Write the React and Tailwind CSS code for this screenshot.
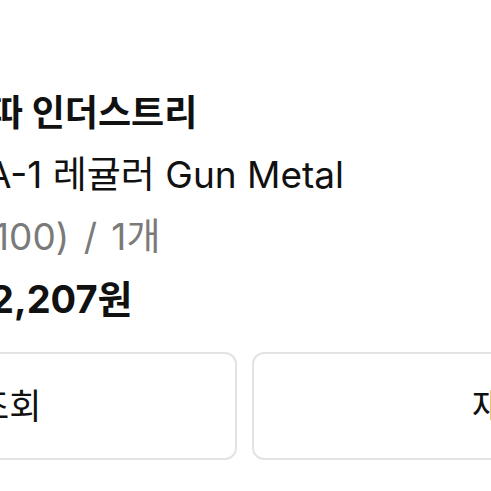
export default function App() {
  const font = { fontFamily: 'Inter, "Noto Sans CJK KR", sans-serif' };
  return (
    <div className="w-[491px] h-[491px] overflow-hidden bg-white text-[#111]" style={font}>
      <div className="pt-[82px] flex flex-col leading-[62px] whitespace-nowrap">
        <p className="-ml-[10px] text-[36px] font-bold">따 인더스트리</p>
        <p className="-ml-[14px] text-[37px]">A-1 레귤러 Gun Metal</p>
        <p className="-ml-[6px] text-[37px] text-[#7a7a7a] [word-spacing:4px]">100) / 1개</p>
        <p className="-ml-[10px] text-[38px] font-bold">2,207원</p>
      </div>
      <div className="mt-[22px] -ml-[283px] flex gap-[15px] whitespace-nowrap">
        <button className="w-[520px] h-[108px] shrink-0 rounded-[12px] border-2 border-[#e3e3e3] flex items-center justify-center text-[35px]">
          배송조회
        </button>
        <button className="w-[520px] h-[108px] shrink-0 rounded-[12px] border-2 border-[#e3e3e3] flex items-center justify-center pl-[16px] text-[35px]">
          재구매
        </button>
      </div>
    </div>
  );
}
